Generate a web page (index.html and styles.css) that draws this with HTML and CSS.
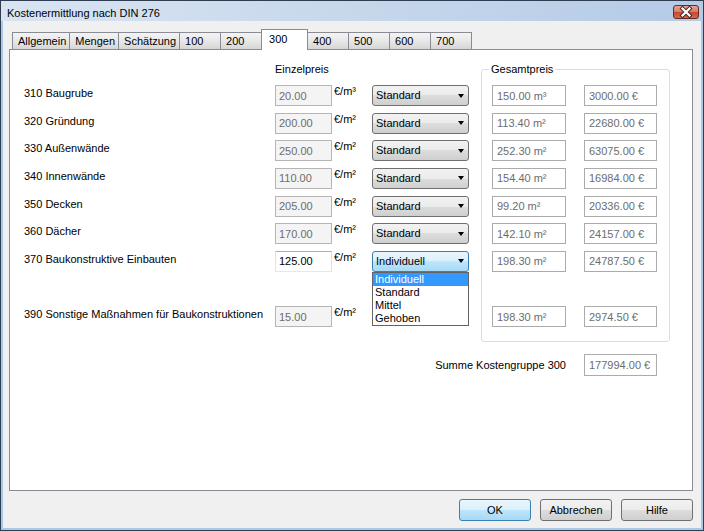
FILE: index.html
```html
<!DOCTYPE html>
<html lang="de">
<head>
  <meta charset="UTF-8">
  <title>Kostenermittlung nach DIN 276</title>
  <link rel="stylesheet" href="styles.css">
</head>
<body>
  <div class="window">
    <div class="titlebar">
      <span class="title">Kostenermittlung nach DIN 276</span>
      <span class="close">
        <svg width="24" height="12" viewBox="0 0 24 12">
          <path d="M8.5 2.5 L15.5 9.5 M15.5 2.5 L8.5 9.5" stroke="#4a2a24" stroke-width="4.2" stroke-linecap="square"/>
          <path d="M8.5 2.5 L15.5 9.5 M15.5 2.5 L8.5 9.5" stroke="#fff" stroke-width="2.2" stroke-linecap="square"/>
        </svg>
      </span>
    </div>

    <div class="client">
      <div class="tabs">
        <div class="tab">Allgemein</div>
        <div class="tab">Mengen</div>
        <div class="tab">Schätzung</div>
        <div class="tab num">100</div>
        <div class="tab num">200</div>
        <div class="tab num active">300</div>
        <div class="tab num">400</div>
        <div class="tab num">500</div>
        <div class="tab num">600</div>
        <div class="tab num">700</div>
      </div>

      <div class="panel">
        <div class="content">
          <div class="positions">
            <div class="head">Einzelpreis</div>

            <div class="row">
              <div class="label">310 Baugrube</div>
              <input class="field" value="20.00" disabled>
              <div class="unit">€/m³</div>
              <div class="combo"><span>Standard</span><i class="arrow"></i></div>
            </div>
            <div class="row">
              <div class="label">320 Gründung</div>
              <input class="field" value="200.00" disabled>
              <div class="unit">€/m²</div>
              <div class="combo"><span>Standard</span><i class="arrow"></i></div>
            </div>
            <div class="row">
              <div class="label">330 Außenwände</div>
              <input class="field" value="250.00" disabled>
              <div class="unit">€/m²</div>
              <div class="combo"><span>Standard</span><i class="arrow"></i></div>
            </div>
            <div class="row">
              <div class="label">340 Innenwände</div>
              <input class="field" value="110.00" disabled>
              <div class="unit">€/m²</div>
              <div class="combo"><span>Standard</span><i class="arrow"></i></div>
            </div>
            <div class="row">
              <div class="label">350 Decken</div>
              <input class="field" value="205.00" disabled>
              <div class="unit">€/m²</div>
              <div class="combo"><span>Standard</span><i class="arrow"></i></div>
            </div>
            <div class="row">
              <div class="label">360 Dächer</div>
              <input class="field" value="170.00" disabled>
              <div class="unit">€/m²</div>
              <div class="combo"><span>Standard</span><i class="arrow"></i></div>
            </div>
            <div class="row">
              <div class="label">370 Baukonstruktive Einbauten</div>
              <input class="field edit" value="125.00">
              <div class="unit">€/m²</div>
              <div class="combo open"><span>Individuell</span><i class="arrow"></i>
                <div class="combo-list">
                  <div class="item selected">Individuell</div>
                  <div class="item">Standard</div>
                  <div class="item">Mittel</div>
                  <div class="item">Gehoben</div>
                </div>
              </div>
            </div>
            <div class="spacer"></div>
            <div class="row">
              <div class="label">390 Sonstige Maßnahmen für Baukonstruktionen</div>
              <input class="field" value="15.00" disabled>
              <div class="unit">€/m²</div>
            </div>
          </div>

          <fieldset class="group">
            <legend>Gesamtpreis</legend>
            <div class="totals">
              <input class="out" value="150.00 m³" readonly><input class="out col2" value="3000.00 €" readonly>
              <input class="out" value="113.40 m²" readonly><input class="out col2" value="22680.00 €" readonly>
              <input class="out" value="252.30 m²" readonly><input class="out col2" value="63075.00 €" readonly>
              <input class="out" value="154.40 m²" readonly><input class="out col2" value="16984.00 €" readonly>
              <input class="out" value="99.20 m²" readonly><input class="out col2" value="20336.00 €" readonly>
              <input class="out" value="142.10 m²" readonly><input class="out col2" value="24157.00 €" readonly>
              <input class="out" value="198.30 m²" readonly><input class="out col2" value="24787.50 €" readonly>
              <div class="spacer"></div>
              <input class="out" value="198.30 m²" readonly><input class="out col2" value="2974.50 €" readonly>
            </div>
          </fieldset>
        </div>

        <div class="summe">
          <span>Summe Kostengruppe 300</span>
          <input class="out total" value="177994.00 €" readonly>
        </div>
      </div>

      <div class="buttons">
        <button class="btn default">OK</button>
        <button class="btn">Abbrechen</button>
        <button class="btn">Hilfe</button>
      </div>
    </div>
  </div>
</body>
</html>
```

FILE: styles.css
```css
body {
  margin: 0;
  font-family: "Liberation Sans", Arial, sans-serif;
  font-size: 11px;
  color: #000;
}

.window {
  width: 704px;
  height: 531px;
  box-sizing: border-box;
  border: 1px solid #2e3d50;
  display: flex;
  flex-direction: column;
  background: #f0f0f0;
}

/* title bar */
.titlebar {
  height: 20px;
  flex: none;
  display: flex;
  justify-content: space-between;
  background: linear-gradient(to right, #d9e4f2, #b4cbe6);
}
.title {
  padding: 5px 0 0 6px;
  font-size: 11px;
  line-height: 14px;
}
.close {
  width: 26px;
  height: 14px;
  box-sizing: border-box;
  margin: 4px 4px 0 0;
  border: 1px solid #6a2a20;
  border-radius: 3px;
  background: linear-gradient(#e7a595, #d57a64 50%, #c5472f 50%, #d16a4f);
  display: flex;
  align-items: center;
  justify-content: center;
}

.client {
  flex: 1;
  border: 2px solid #aac8e9;
  border-top: none;
  padding: 8px 8px 0 6px;
}

/* tabs */
.tabs {
  display: flex;
  align-items: flex-end;
  height: 20px;
  padding-left: 3px;
}
.tab {
  box-sizing: border-box;
  height: 17px;
  padding: 0 3px 0 5px;
  margin-right: -1px;
  border: 1px solid #898c95;
  border-bottom: none;
  line-height: 16px;
  background: linear-gradient(#f4f4f4, #e6e6e6 55%, #d6d6d6);
}
.tab.num {
  min-width: 42px;
}
.tab.active {
  min-width: 47px;
  height: 21px;
  margin-bottom: -1px;
  padding-left: 7px;
  line-height: 19px;
  background: #fff;
  position: relative;
  z-index: 1;
}

.panel {
  height: 442px;
  box-sizing: border-box;
  border: 1px solid #898c95;
  background: #fff;
}
.content {
  display: flex;
  align-items: flex-start;
  padding: 10px 0 0 14px;
}

/* left: positions */
.positions {
  display: grid;
  grid-template-columns: 251px 57px 40px 97px;
  grid-template-rows: 24px repeat(9, 27.67px);
}
.row {
  display: contents;
}
.head {
  grid-column: 2 / 5;
  padding-top: 3px;
  line-height: 13px;
}
.spacer {
  grid-column: 1 / -1;
}
.label {
  grid-column: 1;
  padding-top: 3px;
  line-height: 13px;
  white-space: nowrap;
}
.field, .out {
  box-sizing: border-box;
  height: 21px;
  margin: 1px 0 0;
  padding: 0 3px;
  border: 1px solid #ababab;
  font: inherit;
  color: #6d6d6d;
  background: #fff;
  outline: none;
}
.field {
  width: 57px;
  background: #f4f4f4;
  border-color: #b5b5b5;
}
.field.edit {
  background: #fff;
  color: #000;
  border-color: #abadb3 #dbdfe6 #e3e9ef #e2e3ea;
}
.unit {
  grid-column: 3;
  padding: 1px 0 0 2px;
  line-height: 13px;
}

/* combo boxes */
.combo {
  grid-column: 4;
  position: relative;
  box-sizing: border-box;
  height: 21px;
  margin-top: 1px;
  padding: 0 4px 0 3px;
  border: 1px solid #707070;
  border-radius: 3px;
  background: linear-gradient(#f2f2f2, #ebebeb 50%, #dddddd 50%, #cfcfcf);
  display: flex;
  align-items: center;
  justify-content: space-between;
  line-height: 13px;
}
.combo.open {
  border-color: #3c7fb1;
  background: linear-gradient(#eaf6fd, #d9f0fc 50%, #bee6fd 50%, #a7d9f5);
}
.arrow {
  width: 0;
  height: 0;
  border-left: 3.5px solid transparent;
  border-right: 3.5px solid transparent;
  border-top: 4px solid #000;
}
.combo-list {
  position: absolute;
  top: calc(100% + 1px);
  left: -1px;
  width: 97px;
  box-sizing: border-box;
  border: 1px solid #646464;
  background: #fff;
  z-index: 2;
}
.item {
  height: 13px;
  line-height: 13px;
  padding-left: 2px;
}
.item.selected {
  background: #3399ff;
  color: #fff;
}

/* right: group box */
.group {
  margin: 2px 0 0 12px;
  padding: 8px 12px 8px 10px;
  border: 1px solid #d5dfe5;
  border-radius: 3px;
  min-width: 0;
}
.group legend {
  padding: 0 2px;
  margin-left: -3px;
  line-height: 14px;
}
.totals {
  display: grid;
  grid-template-columns: 74px 18px 73px;
  grid-template-rows: repeat(9, 27.67px);
}
.out {
  grid-column: 1;
  width: 74px;
  padding-left: 4px;
}
.out.col2 {
  grid-column: 3;
  width: 73px;
}

.summe {
  display: flex;
  justify-content: flex-end;
  align-items: center;
  gap: 18px;
  width: 633px;
  margin: 12px 0 0 14px;
}
.out.total {
  width: 73px;
  height: 22px;
  margin: 0;
}

/* buttons */
.buttons {
  display: flex;
  justify-content: flex-end;
  gap: 9px;
  margin-top: 8px;
}
.btn {
  width: 72px;
  height: 22px;
  border: 1px solid #707070;
  border-radius: 3px;
  background: linear-gradient(#f2f2f2, #ebebeb 50%, #dddddd 50%, #cfcfcf);
  font: inherit;
  color: #000;
  padding: 0;
}
.btn.default {
  border-color: #3c7fb1;
  background: linear-gradient(#eaf6fd, #d9f0fc 50%, #bee6fd 50%, #a7d9f5);
}
```
